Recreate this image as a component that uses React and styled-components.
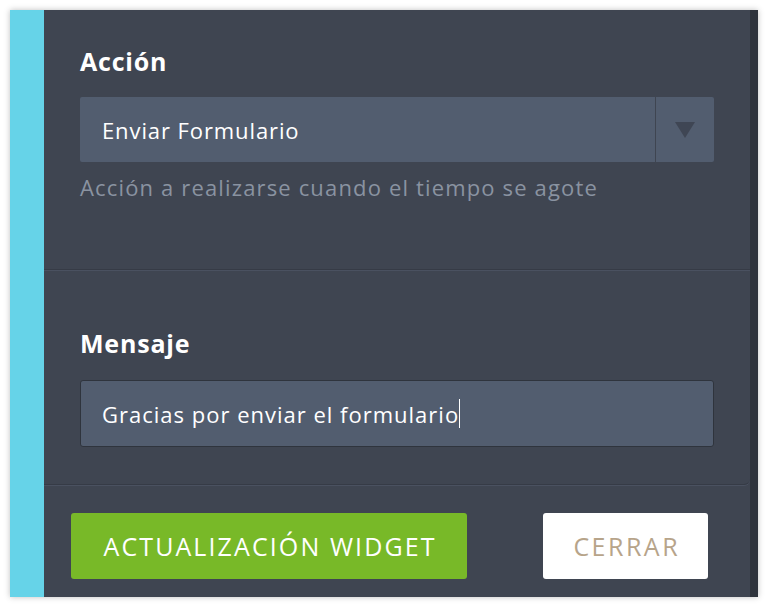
import React from "react";
import styled, { createGlobalStyle } from "styled-components";

const Global = createGlobalStyle`
  html, body { margin: 0; padding: 0; background: #ffffff; }
  body { font-family: "Open Sans", "Lato", sans-serif; }
`;

const Frame = styled.div`
  margin: 10px;
  width: 748px;
  height: 587px;
  display: flex;
  box-shadow: 0 0 6px rgba(0, 0, 0, 0.25);
`;

const Accent = styled.div`
  width: 34px;
  background: #66d3e8;
  flex: none;
`;

const Main = styled.div`
  flex: 1;
  display: flex;
  flex-direction: column;
  background: #3f4551;
  border-right: 8px solid #2e333c;
`;

const Section = styled.section`
  display: flex;
  flex-direction: column;
  padding: ${(p) => p.$pad};
  height: ${(p) => p.$h}px;
  box-sizing: border-box;
  border-bottom: 1px solid #363b46;
  box-shadow: 0 1px 0 #4a5160;
  border-bottom-right-radius: ${(p) => (p.$round ? "6px" : "0")};
`;

const Label = styled.h3`
  margin: 0;
  font-size: 25px;
  font-weight: 700;
  letter-spacing: 0.8px;
  color: #ffffff;
  line-height: 26px;
`;

const SelectBox = styled.div`
  margin-top: 23px;
  width: 634px;
  height: 65px;
  display: flex;
  background: #525d6f;
  border-radius: 2px;
`;

const SelectValue = styled.div`
  flex: 1;
  display: flex;
  align-items: center;
  padding-left: 22px;
  font-size: 22px;
  letter-spacing: 0.9px;
  color: #ffffff;
  border-right: 1px solid #3f4551;
`;

const Caret = styled.div`
  width: 58px;
  display: flex;
  align-items: center;
  justify-content: center;
`;

const Hint = styled.p`
  margin: 12px 0 0;
  font-size: 22px;
  letter-spacing: 1.15px;
  color: #8a93a1;
  line-height: 26px;
`;

const TextInput = styled.div`
  margin-top: 24px;
  width: 634px;
  height: 67px;
  box-sizing: border-box;
  display: flex;
  align-items: center;
  padding-left: 21px;
  background: #525d6f;
  border: 1px solid #2f343d;
  border-radius: 3px;
  font-size: 22px;
  letter-spacing: 1px;
  color: #ffffff;
`;

const Cursor = styled.span`
  display: inline-block;
  width: 1px;
  height: 29px;
  background: #ffffff;
`;

const Footer = styled.div`
  flex: 1;
  display: flex;
  align-items: center;
  justify-content: space-between;
  padding: 10px 42px 0 27px;
`;

const Button = styled.button`
  width: ${(p) => p.$w}px;
  height: 66px;
  border: none;
  border-radius: 3px;
  padding: 0 0 0 ${(p) => p.$ls}px;
  font-family: inherit;
  font-size: 25px;
  font-weight: 400;
  letter-spacing: ${(p) => p.$ls}px;
  background: ${(p) => (p.$primary ? "#78b928" : "#ffffff")};
  color: ${(p) => (p.$primary ? "#ffffff" : "#b7a48a")};
  cursor: pointer;
`;

export default function App() {
  return (
    <>
      <Global />
      <Frame>
        <Accent />
        <Main>
          <Section $h={260} $pad="38px 36px 0">
            <Label>Acción</Label>
            <SelectBox>
              <SelectValue>Enviar Formulario</SelectValue>
              <Caret>
                <svg width="20" height="16" viewBox="0 0 20 16">
                  <path d="M0 0 L20 0 L10 16 Z" fill="#3f4654" />
                </svg>
              </Caret>
            </SelectBox>
            <Hint>Acción a realizarse cuando el tiempo se agote</Hint>
          </Section>
          <Section $h={215} $pad="60px 36px 0" $round>
            <Label>Mensaje</Label>
            <TextInput>
              Gracias por enviar el formulario
              <Cursor />
            </TextInput>
          </Section>
          <Footer>
            <Button $primary $w={396} $ls={2.1}>ACTUALIZACIÓN WIDGET</Button>
            <Button $w={165} $ls={2.5}>CERRAR</Button>
          </Footer>
        </Main>
      </Frame>
    </>
  );
}
